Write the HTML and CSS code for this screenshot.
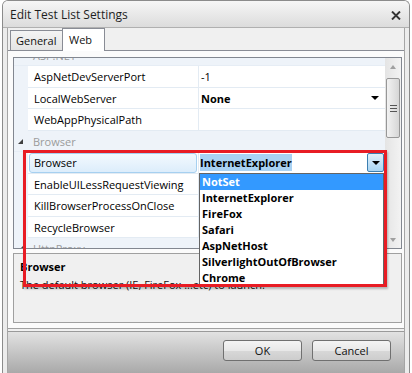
FILE: index.html
```html
<!DOCTYPE html>
<html>
<head>
<meta charset="utf-8">
<link rel="stylesheet" href="styles.css">
</head>
<body>
<div class="window">
  <div class="titlebar">
    <span class="title">Edit Test List Settings</span>
    <svg class="close" width="10" height="9" viewBox="0 0 10 9"><path d="M1 0.5 L9 8.5 M9 0.5 L1 8.5" stroke="#333" stroke-width="1.9" fill="none"/></svg>
  </div>
  <div class="client">
    <div class="tabs">
      <div class="tab">General</div>
      <div class="tab active">Web</div>
    </div>
    <div class="panel">
      <div class="view">
        <div class="rows">
          <div class="cat top"><span class="catin"><span class="tri"></span>ASP.NET</span></div>
          <div class="row r22"><div class="gut"></div><div class="lbl">AspNetDevServerPort</div><div class="val">-1</div></div>
          <div class="row r21"><div class="gut"></div><div class="lbl">LocalWebServer</div><div class="val"><b>None</b><span class="arrow"></span></div></div>
          <div class="row r22"><div class="gut"></div><div class="lbl">WebAppPhysicalPath</div><div class="val"></div></div>
          <div class="cat r21"><span class="catin"><span class="tri"></span>Browser</span></div>
          <div class="row r22"><div class="gut"></div><div class="lbl sel"><span class="selbox">Browser</span></div><div class="val active"><span class="hl">InternetExplorer</span><span class="ddbtn"><span class="arrow"></span></span>
            <div class="list">
              <div class="item on">NotSet</div>
              <div class="item">InternetExplorer</div>
              <div class="item">FireFox</div>
              <div class="item">Safari</div>
              <div class="item">AspNetHost</div>
              <div class="item">SilverlightOutOfBrowser</div>
              <div class="item">Chrome</div>
            </div>
          </div></div>
          <div class="row r21"><div class="gut"></div><div class="lbl">EnableUILessRequestViewing</div><div class="val"></div></div>
          <div class="row r22"><div class="gut"></div><div class="lbl">KillBrowserProcessOnClose</div><div class="val"></div></div>
          <div class="row r21"><div class="gut"></div><div class="lbl">RecycleBrowser</div><div class="val"></div></div>
          <div class="cat bot"><span class="catin"><span class="tri"></span>HttpProxy</span></div>
        </div>
        <div class="sb">
          <div class="sbbtn"><span class="up"></span></div>
          <div class="thumb"><span class="grip"></span></div>
          <div class="sbfill"></div>
          <div class="sbbtn"><span class="down"></span></div>
        </div>
      </div>
      <div class="split"></div>
      <div class="help">
        <div class="ht">Browser</div>
        <div class="hd">The default browser (IE, FireFox ...etc) to launch.</div>
      </div>
    </div>
    <div class="bottom">
      <div class="btn">OK</div>
      <div class="btn">Cancel</div>
    </div>
  </div>
</div>
<div class="callout"></div>
</body>
</html>
```
FILE: styles.css
```css
html, body { margin: 0; padding: 0; }
body {
  background: #fff;
  font-family: "Open Sans", "Noto Sans", sans-serif;
  font-size: 11px;
  color: #000;
  position: relative;
  height: 373px;
  overflow: hidden;
}
.window {
  margin-left: 2px;
  width: 408px;
  height: 373px;
  box-sizing: border-box;
  border: 1px solid #8b8b8b;
  border-bottom: none;
  border-radius: 6px 6px 0 0;
  background: #ececec;
  display: flex;
  flex-direction: column;
}
.titlebar {
  height: 26px;
  flex: none;
  display: flex;
  align-items: center;
  justify-content: space-between;
  padding: 0 8px 0 7px;
  background: linear-gradient(#f6f6f6, #dcdcdc);
  border-bottom: 1px solid #b0b0b0;
  border-radius: 5px 5px 0 0;
  font-size: 12px;
  color: #1e1e1e;
}
.close { margin-top: 2px; }
.client {
  flex: 1;
  margin: 0 4px;
  border-left: 1px solid #a5a5a5;
  border-right: 1px solid #a5a5a5;
  background: #f0f0f0;
  display: flex;
  flex-direction: column;
}
.tabs {
  height: 22px;
  flex: none;
  display: flex;
  align-items: flex-end;
  padding-left: 2px;
}
.tab {
  height: 20px;
  width: 53px;
  box-sizing: border-box;
  border: 1px solid #898c95;
  border-bottom: none;
  padding: 0 5px;
  display: flex;
  align-items: center;
  background: linear-gradient(#f4f4f4, #e4e4e4);
  color: #111;
}
.tab.active {
  height: 23px;
  width: 43px;
  margin-left: -1px;
  margin-bottom: -1px;
  padding: 0 6px 2px;
  background: #fff;
  position: relative;
  z-index: 1;
}
.panel {
  flex: none;
  border-top: 1px solid #898c95;
  border-bottom: 1px solid #a0a0a0;
  background: #fbfbfb;
  padding: 6px 2px 5px 5px;
}
.view {
  height: 192px;
  box-sizing: border-box;
  border: 1px solid #828790;
  display: flex;
  background: #fff;
}
.rows { flex: 1; display: flex; flex-direction: column; }
.cat, .row { box-sizing: border-box; flex: none; }
.r21 { height: 21px; }
.r22 { height: 22px; }
.cat {
  display: flex;
  background: #eef3f9;
  color: #9b9b9b;
  border-bottom: 1px solid #e6edf5;
  overflow: hidden;
}
.cat.top { height: 8px; align-items: flex-end; }
.cat.bot { height: 10px; align-items: flex-start; border-bottom: none; }
.catin {
  height: 20px;
  flex: none;
  display: flex;
  align-items: center;
}
.tri {
  width: 0; height: 0;
  border-left: 5px solid transparent;
  border-bottom: 5px solid #404040;
  margin: 0 10px 0 4px;
}
.row { display: flex; border-bottom: 1px solid #e3ebf3; }
.gut { width: 14px; flex: none; background: #eef3f9; margin-bottom: -1px; }
.lbl {
  width: 171px;
  flex: none;
  box-sizing: border-box;
  border-right: 1px solid #e3ebf3;
  padding-left: 6px;
  display: flex;
  align-items: center;
  white-space: nowrap;
}
.lbl.sel { padding: 0 1px; }
.selbox {
  flex: 1;
  height: 20px;
  box-sizing: border-box;
  border: 1px solid #a6d0f0;
  border-radius: 3px;
  background: linear-gradient(#f3f9fe, #dcedfb);
  padding-left: 4px;
  display: flex;
  align-items: center;
}
.val {
  flex: 1;
  padding-left: 2px;
  display: flex;
  align-items: center;
  position: relative;
  white-space: nowrap;
}
.val.active { padding-left: 1px; }
.val .arrow {
  margin-left: auto;
  margin-right: 6px;
}
.arrow {
  width: 0; height: 0;
  border-left: 4px solid transparent;
  border-right: 4px solid transparent;
  border-top: 4px solid #000;
}
.hl { background: #a9d2f3; font-weight: bold; padding: 1px 0; }
.ddbtn {
  margin-left: auto;
  margin-right: 1px;
  width: 17px;
  height: 19px;
  box-sizing: border-box;
  border: 1px solid #3c7fb1;
  border-radius: 2px;
  background: linear-gradient(#e3f1fb, #a9d5f3);
  display: flex;
  align-items: center;
  justify-content: center;
}
.ddbtn .arrow { margin: 0; }
.list {
  position: absolute;
  top: 100%;
  left: 0;
  width: 185px;
  box-sizing: border-box;
  border: 1px solid #646464;
  background: #fff;
  z-index: 3;
}
.item {
  height: 16px;
  line-height: 16px;
  padding-left: 2px;
  font-weight: bold;
}
.item.on { background: #3399ff; color: #fff; }
.sb {
  width: 16px;
  flex: none;
  display: flex;
  flex-direction: column;
  background: linear-gradient(90deg, #e4e4e4, #f3f3f3);
}
.sbbtn {
  height: 17px;
  flex: none;
  display: flex;
  align-items: center;
  justify-content: center;
}
.up, .down { width: 0; height: 0; border-left: 3px solid transparent; border-right: 3px solid transparent; }
.up { border-bottom: 4px solid #a0a0a0; }
.down { border-top: 4px solid #a0a0a0; }
.thumb {
  height: 60px;
  margin: 3px 1px 0;
  box-sizing: border-box;
  border: 1px solid #979797;
  border-radius: 2px;
  background: linear-gradient(90deg, #f2f2f2, #d6d6d6);
  display: flex;
  align-items: center;
  justify-content: center;
}
.grip {
  width: 7px;
  height: 5px;
  border-top: 1px solid #555;
  border-bottom: 1px solid #555;
  position: relative;
}
.grip::after {
  content: "";
  position: absolute;
  left: 0; right: 0; top: 2px;
  border-top: 1px solid #555;
}
.sbfill { flex: 1; }
.split { height: 4px; }
.help {
  height: 70px;
  box-sizing: border-box;
  border: 1px solid #a0a0a0;
  background: #f0f0f0;
  padding: 5px 6px;
}
.ht { font-weight: bold; line-height: 16px; }
.hd { line-height: 16px; margin-top: 2px; color: #111; }
.bottom {
  flex: 1;
  margin-top: 2px;
  border-top: 1px solid #9a9a9a;
  background: linear-gradient(#e2e2e2, #a9a9a9);
  display: flex;
  justify-content: flex-end;
  align-items: flex-start;
  padding: 8px 13px 0 0;
  gap: 10px;
}
.btn {
  width: 79px;
  height: 21px;
  box-sizing: border-box;
  border: 1px solid #707070;
  border-radius: 3px;
  background: linear-gradient(#f4f4f4 0%, #e8e8e8 50%, #d8d8d8 51%, #cdcdcd 100%);
  display: flex;
  align-items: center;
  justify-content: center;
  color: #111;
}
.callout {
  position: absolute;
  left: 23px;
  top: 150px;
  width: 364px;
  height: 137px;
  box-sizing: border-box;
  border: 3px solid #e81c24;
  box-shadow: 1px 2px 2px rgba(0,0,0,0.25);
  z-index: 5;
}
```
